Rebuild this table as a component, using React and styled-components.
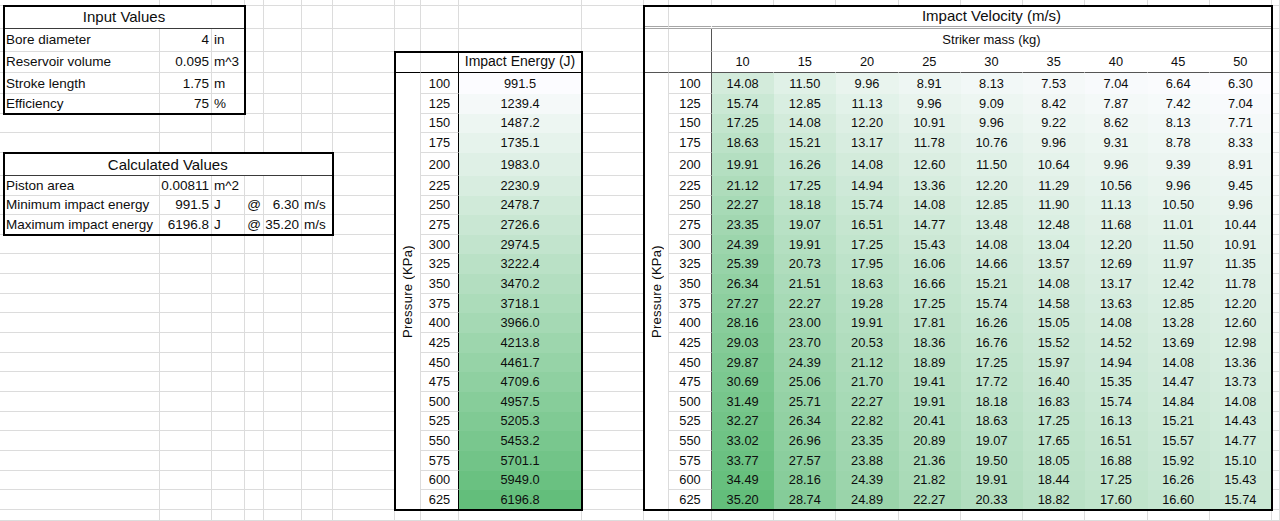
import React from "react";
import styled, { createGlobalStyle } from "styled-components";

const GRID = "#dcdcdc";
const INK = "#0d0d0d";
const DARK = "#000";

const GlobalStyle = createGlobalStyle`
  html, body { margin: 0; padding: 0; background: #fff; overflow: hidden; }
  body { font-family: "Liberation Sans", Arial, sans-serif; color: ${INK}; }
`;

const COLS = [4, 156, 52, 33, 19, 38, 30.5, 62.5, 26, 38, 123, 62, 25, 43, ...Array(9).fill(560 / 9), 8];
const ROWS = [5.7, 23.3, 22.7, 21.6, 20.7, 19.7, 19.6, 20, 22.7, ...Array(17).fill(19.65), 11];

const Sheet = styled.div`
  display: grid;
  grid-template-columns: ${COLS.map((w) => w.toFixed(3) + "px").join(" ")};
  grid-template-rows: ${ROWS.map((h) => h.toFixed(3) + "px").join(" ")};
  width: 1280px;
  height: 521px;
  overflow: hidden;
`;

const JUST = { left: "flex-start", right: "flex-end", center: "center" };

const Cell = styled.div`
  grid-column: ${(p) => `${p.$c + 1} / span ${p.$cs || 1}`};
  grid-row: ${(p) => `${p.$r + 1} / span ${p.$rs || 1}`};
  box-sizing: border-box;
  min-width: 0;
  min-height: 0;
  display: flex;
  align-items: center;
  justify-content: ${(p) => JUST[p.$align || "left"]};
  padding: 0 2px;
  background: ${(p) => p.$bg || "#fff"};
  border-right: 1px solid ${(p) => p.$rb || GRID};
  border-bottom: ${(p) => p.$bbw || 1}px ${(p) => p.$bbs || "solid"} ${(p) => p.$bb || GRID};
  font-size: ${(p) => p.$fs || 13.5}px;
  line-height: 15px;
  white-space: nowrap;
`;

const Sideways = styled.span`
  writing-mode: vertical-rl;
  transform: rotate(180deg);
  font-size: 13px;
  letter-spacing: 0.3px;
`;

const Frame = styled.div`
  grid-column: ${(p) => `${p.$c + 1} / span ${p.$cs}`};
  grid-row: ${(p) => `${p.$r + 1} / span ${p.$rs}`};
  margin: -1px;
  border: 2px solid ${DARK};
  z-index: 2;
  pointer-events: none;
`;

const ENERGY = [
  "991.5", "1239.4", "1487.2", "1735.1", "1983.0", "2230.9", "2478.7", "2726.6", "2974.5", "3222.4", "3470.2",
  "3718.1", "3966.0", "4213.8", "4461.7", "4709.6", "4957.5", "5205.3", "5453.2", "5701.1", "5949.0", "6196.8",
];

const VEL = [
  "14.08 11.50 9.96 8.91 8.13 7.53 7.04 6.64 6.30",
  "15.74 12.85 11.13 9.96 9.09 8.42 7.87 7.42 7.04",
  "17.25 14.08 12.20 10.91 9.96 9.22 8.62 8.13 7.71",
  "18.63 15.21 13.17 11.78 10.76 9.96 9.31 8.78 8.33",
  "19.91 16.26 14.08 12.60 11.50 10.64 9.96 9.39 8.91",
  "21.12 17.25 14.94 13.36 12.20 11.29 10.56 9.96 9.45",
  "22.27 18.18 15.74 14.08 12.85 11.90 11.13 10.50 9.96",
  "23.35 19.07 16.51 14.77 13.48 12.48 11.68 11.01 10.44",
  "24.39 19.91 17.25 15.43 14.08 13.04 12.20 11.50 10.91",
  "25.39 20.73 17.95 16.06 14.66 13.57 12.69 11.97 11.35",
  "26.34 21.51 18.63 16.66 15.21 14.08 13.17 12.42 11.78",
  "27.27 22.27 19.28 17.25 15.74 14.58 13.63 12.85 12.20",
  "28.16 23.00 19.91 17.81 16.26 15.05 14.08 13.28 12.60",
  "29.03 23.70 20.53 18.36 16.76 15.52 14.52 13.69 12.98",
  "29.87 24.39 21.12 18.89 17.25 15.97 14.94 14.08 13.36",
  "30.69 25.06 21.70 19.41 17.72 16.40 15.35 14.47 13.73",
  "31.49 25.71 22.27 19.91 18.18 16.83 15.74 14.84 14.08",
  "32.27 26.34 22.82 20.41 18.63 17.25 16.13 15.21 14.43",
  "33.02 26.96 23.35 20.89 19.07 17.65 16.51 15.57 14.77",
  "33.77 27.57 23.88 21.36 19.50 18.05 16.88 15.92 15.10",
  "34.49 28.16 24.39 21.82 19.91 18.44 17.25 16.26 15.43",
  "35.20 28.74 24.89 22.27 20.33 18.82 17.60 16.60 15.74",
].map((r) => r.split(" "));

const PRESSURES = Array.from({ length: 22 }, (_, i) => 100 + i * 25);
const MASSES = [10, 15, 20, 25, 30, 35, 40, 45, 50];

const LOW = [252, 252, 255];
const HIGH = [99, 190, 123];
const scale = (v, min, max) => {
  const t = (v - min) / (max - min);
  return `rgb(${LOW.map((x, i) => Math.round(x + (HIGH[i] - x) * t)).join(",")})`;
};

function buildCells() {
  const cells = [];
  const add = (r, c, o = {}) => cells.push({ r, c, ...o });

  // Input Values
  add(1, 1, { cs: 3, text: "Input Values", align: "center", fs: 15, bb: "#3a3a3a" });
  [
    ["Bore diameter", "4", "in"],
    ["Reservoir volume", "0.095", "m^3"],
    ["Stroke length", "1.75", "m"],
    ["Efficiency", "75", "%"],
  ].forEach(([l, v, u], i) => {
    add(2 + i, 1, { text: l });
    add(2 + i, 2, { text: v, align: "right" });
    add(2 + i, 3, { text: u });
  });

  // Calculated Values
  add(8, 1, { cs: 6, text: "Calculated Values", align: "center", fs: 15, bb: "#3a3a3a" });
  add(9, 1, { text: "Piston area" });
  add(9, 2, { text: "0.00811", align: "right" });
  add(9, 3, { text: "m^2" });
  [
    ["Minimum impact energy", "991.5", "6.30"],
    ["Maximum impact energy", "6196.8", "35.20"],
  ].forEach(([l, e, v], i) => {
    const r = 10 + i;
    add(r, 1, { text: l });
    add(r, 2, { text: e, align: "right" });
    add(r, 3, { text: "J" });
    add(r, 4, { text: "@", align: "center" });
    add(r, 5, { text: v, align: "right" });
    add(r, 6, { text: "m/s" });
  });

  // Impact Energy table
  add(3, 8, { bb: DARK });
  add(3, 9, { bb: DARK, rb: DARK });
  add(3, 10, { text: "Impact Energy (J)", align: "center", fs: 14, bb: DARK });
  add(4, 8, { rs: 22, side: "Pressure (KPa)", align: "center" });
  const eMin = parseFloat(ENERGY[0]);
  const eMax = parseFloat(ENERGY[ENERGY.length - 1]);
  PRESSURES.forEach((p, i) => {
    const r = 4 + i;
    add(r, 9, { text: String(p), align: "center", rb: DARK, fs: 12.8 });
    const bg = scale(parseFloat(ENERGY[i]), eMin, eMax);
    add(r, 10, { text: ENERGY[i], align: "center", bg, bb: bg, fs: 12.8 });
  });

  // Impact Velocity table
  add(1, 12, { bb: "#a6a6a6", bbw: 3, bbs: "double" });
  add(1, 13, { bb: "#a6a6a6", bbw: 3, bbs: "double", rb: "#fff" });
  add(1, 14, { cs: 9, text: "Impact Velocity (m/s)", align: "center", fs: 15, bb: "#a6a6a6", bbw: 3, bbs: "double" });
  add(2, 12);
  add(2, 13, { rb: "#555" });
  add(2, 14, { cs: 9, text: "Striker mass (kg)", align: "center", fs: 13 });
  add(3, 12, { bb: "#555" });
  add(3, 13, { bb: "#555", rb: "#555" });
  MASSES.forEach((m, j) => add(3, 14 + j, { text: String(m), align: "center", bb: "#555", rb: "#fff", fs: 12.8 }));
  add(4, 12, { rs: 22, side: "Pressure (KPa)", align: "center" });
  const all = VEL.flat().map(parseFloat);
  const vMin = Math.min(...all);
  const vMax = Math.max(...all);
  PRESSURES.forEach((p, i) => {
    const r = 4 + i;
    add(r, 13, { text: String(p), align: "center", rb: "#555", fs: 12.8 });
    VEL[i].forEach((v, j) => {
      const bg = scale(parseFloat(v), vMin, vMax);
      add(r, 14 + j, { text: v, align: "center", bg, bb: bg, rb: bg, fs: 12.8 });
    });
  });

  // Fill remaining empty cells
  const covered = new Set();
  cells.forEach((c) => {
    for (let dr = 0; dr < (c.rs || 1); dr++)
      for (let dc = 0; dc < (c.cs || 1); dc++) covered.add(`${c.r + dr},${c.c + dc}`);
  });
  for (let r = 0; r < ROWS.length; r++)
    for (let c = 0; c < COLS.length; c++) if (!covered.has(`${r},${c}`)) add(r, c);
  return cells;
}

const CELLS = buildCells();

const FRAMES = [
  { r: 1, c: 1, rs: 5, cs: 3 },
  { r: 8, c: 1, rs: 4, cs: 6 },
  { r: 3, c: 8, rs: 23, cs: 3 },
  { r: 1, c: 12, rs: 25, cs: 11 },
];

export default function App() {
  return (
    <>
      <GlobalStyle />
      <Sheet>
        {CELLS.map((c) => (
          <Cell
            key={`${c.r}-${c.c}`}
            $r={c.r}
            $c={c.c}
            $rs={c.rs}
            $cs={c.cs}
            $align={c.align}
            $fs={c.fs}
            $bg={c.bg}
            $bb={c.bb}
            $bbw={c.bbw}
            $bbs={c.bbs}
            $rb={c.rb}
          >
            {c.side ? <Sideways>{c.side}</Sideways> : c.text}
          </Cell>
        ))}
        {FRAMES.map((f, i) => (
          <Frame key={i} $r={f.r} $c={f.c} $rs={f.rs} $cs={f.cs} />
        ))}
      </Sheet>
    </>
  );
}
